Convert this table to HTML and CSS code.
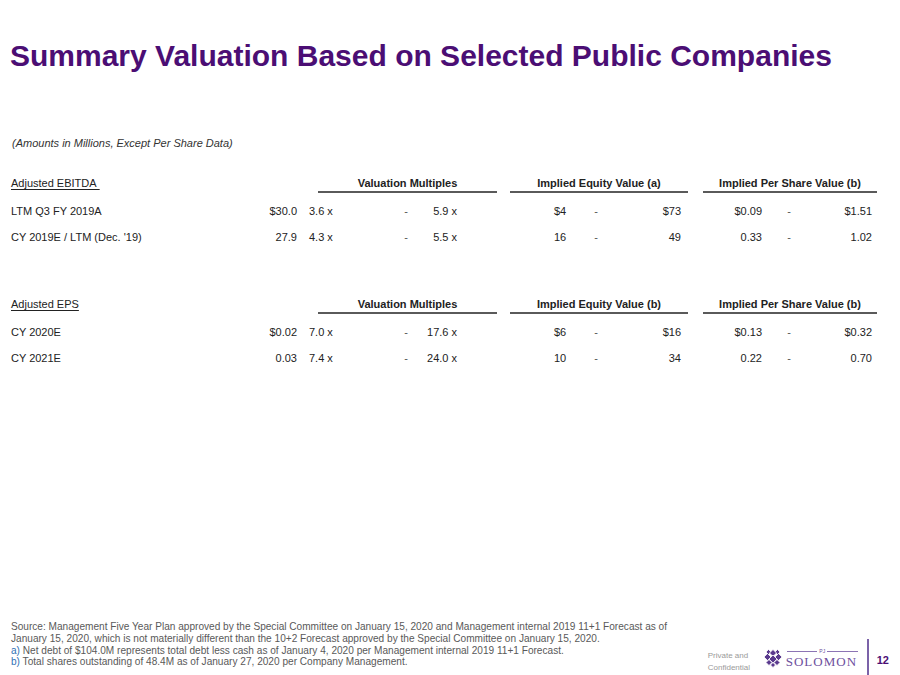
FILE: index.html
```html
<!DOCTYPE html>
<html lang="en">
<head>
<meta charset="utf-8">
<title>Summary Valuation Based on Selected Public Companies</title>
<link rel="stylesheet" href="styles.css">
</head>
<body>
<div class="page">
  <h1 class="title">Summary Valuation Based on Selected Public Companies</h1>
  <p class="note">(Amounts in Millions, Except Per Share Data)</p>

  <section class="block block-one">
    <div class="head">
      <span class="h-label">Adjusted EBITDA&nbsp;</span>
      <span class="h-grp h-vm">Valuation Multiples</span>
      <span class="h-grp h-eq">Implied Equity Value (a)</span>
      <span class="h-grp h-ps">Implied Per Share Value (b)</span>
    </div>
    <div class="row">
      <span class="c-label">LTM Q3 FY 2019A</span>
      <span class="c-val">$30.0</span>
      <span class="c-lo">3.6 x</span>
      <span class="c-dash">-</span>
      <span class="c-hi">5.9 x</span>
      <span class="c-eqlo">$4</span>
      <span class="c-dash">-</span>
      <span class="c-eqhi">$73</span>
      <span class="c-pslo">$0.09</span>
      <span class="c-dash">-</span>
      <span class="c-pshi">$1.51</span>
    </div>
    <div class="row">
      <span class="c-label">CY 2019E / LTM (Dec. '19)</span>
      <span class="c-val">27.9</span>
      <span class="c-lo">4.3 x</span>
      <span class="c-dash">-</span>
      <span class="c-hi">5.5 x</span>
      <span class="c-eqlo">16</span>
      <span class="c-dash">-</span>
      <span class="c-eqhi">49</span>
      <span class="c-pslo">0.33</span>
      <span class="c-dash">-</span>
      <span class="c-pshi">1.02</span>
    </div>
  </section>

  <section class="block block-two">
    <div class="head">
      <span class="h-label">Adjusted EPS</span>
      <span class="h-grp h-vm">Valuation Multiples</span>
      <span class="h-grp h-eq">Implied Equity Value (b)</span>
      <span class="h-grp h-ps">Implied Per Share Value (b)</span>
    </div>
    <div class="row">
      <span class="c-label">CY 2020E</span>
      <span class="c-val">$0.02</span>
      <span class="c-lo">7.0 x</span>
      <span class="c-dash">-</span>
      <span class="c-hi">17.6 x</span>
      <span class="c-eqlo">$6</span>
      <span class="c-dash">-</span>
      <span class="c-eqhi">$16</span>
      <span class="c-pslo">$0.13</span>
      <span class="c-dash">-</span>
      <span class="c-pshi">$0.32</span>
    </div>
    <div class="row">
      <span class="c-label">CY 2021E</span>
      <span class="c-val">0.03</span>
      <span class="c-lo">7.4 x</span>
      <span class="c-dash">-</span>
      <span class="c-hi">24.0 x</span>
      <span class="c-eqlo">10</span>
      <span class="c-dash">-</span>
      <span class="c-eqhi">34</span>
      <span class="c-pslo">0.22</span>
      <span class="c-dash">-</span>
      <span class="c-pshi">0.70</span>
    </div>
  </section>

  <footer class="footer">
    <div class="notes">
      <p>Source: Management Five Year Plan approved by the Special Committee on January 15, 2020 and Management internal 2019 11+1 Forecast as of January 15, 2020, which is not materially different than the 10+2 Forecast approved by the Special Committee on January 15, 2020.</p>
      <p><span class="mark">a)</span> Net debt of $104.0M represents total debt less cash as of January 4, 2020 per Management internal 2019 11+1 Forecast.</p>
      <p><span class="mark">b)</span> Total shares outstanding of 48.4M as of January 27, 2020 per Company Management.</p>
    </div>
    <div class="brand">
      <div class="private">Private and<br>Confidential</div>
      <svg class="logo-icon" viewBox="0 0 20 20" width="20" height="20" aria-hidden="true">
        <g fill="#5a3a8e" stroke="#ffffff" stroke-width="0.8">
          <polygon points="5.5,1.5 8,4 5.5,6.5 3,4"/>
          <polygon points="14.5,1.5 17,4 14.5,6.5 12,4"/>
          <polygon points="10,1.5 13.5,5 10,8.5 6.5,5"/>
          <polygon points="4.5,5.5 8,9 4.5,12.5 1,9"/>
          <polygon points="15.5,5.5 19,9 15.5,12.5 12,9"/>
          <polygon points="10,7 14,11 10,15 6,11"/>
          <polygon points="6,11.5 9,14.5 6,17.5 3,14.5"/>
          <polygon points="14,11.5 17,14.5 14,17.5 11,14.5"/>
          <polygon points="10,14.5 12.5,17 10,19.5 7.5,17"/>
        </g>
      </svg>
      <div class="wordmark">
        <div class="pj"><span class="rule"></span><span class="pj-text">PJ</span><span class="rule"></span></div>
        <div class="solomon">SOLOMON</div>
      </div>
      <div class="divider"></div>
      <div class="page-num">12</div>
    </div>
  </footer>
</div>
</body>
</html>
```

FILE: styles.css
```css
* {
  box-sizing: border-box;
}

html, body {
  margin: 0;
  padding: 0;
  background: #ffffff;
}

body {
  font-family: "Liberation Sans", Arial, sans-serif;
  color: #222222;
}

.page {
  width: 900px;
  height: 675px;
  display: flex;
  flex-direction: column;
  padding: 38px 0 0 11px;
  overflow: hidden;
}

.title {
  margin: 0 0 0 -1px;
  font-size: 30px;
  line-height: 36px;
  font-weight: bold;
  color: #4b0e74;
  white-space: nowrap;
}

.note {
  margin: 62px 0 0 1px;
  font-size: 11px;
  line-height: 14px;
  font-style: italic;
  color: #333333;
}

.block {
  display: flex;
  flex-direction: column;
  font-size: 11px;
}

.block-one {
  margin-top: 27px;
}

.block-two {
  margin-top: 48px;
}

.head {
  display: flex;
  align-items: flex-end;
  line-height: 13px;
  margin-bottom: 5px;
}

.h-label {
  width: 307px;
  text-decoration: underline;
  text-underline-offset: 2px;
  align-self: flex-start;
}

.h-grp {
  font-weight: bold;
  text-align: center;
  border-bottom: 2px solid #5a5a5a;
  padding-bottom: 1px;
}

.h-vm {
  width: 179px;
}

.h-eq {
  width: 178px;
  margin-left: 13px;
}

.h-ps {
  width: 174px;
  margin-left: 15px;
}

.row {
  display: grid;
  grid-template-columns: 238px 48px 99px 20px 41px 129px 20px 75px 98px 20px 73px;
  line-height: 26px;
  height: 26px;
  white-space: nowrap;
}

.c-val,
.c-hi,
.c-eqhi,
.c-pslo,
.c-pshi {
  text-align: right;
}

.c-lo {
  padding-left: 12px;
}

.c-dash {
  text-align: center;
  color: #555555;
}

.c-eqlo {
  padding-left: 97px;
}

.c-pslo {
  padding-right: 17px;
}

.footer {
  margin-top: auto;
  display: flex;
  align-items: flex-end;
  padding-right: 11px;
}

.notes {
  width: 690px;
  flex: 0 0 auto;
  padding-bottom: 7px;
  font-size: 10.1px;
  line-height: 11.7px;
  color: #595959;
}

.notes p {
  margin: 0;
  width: 680px;
}

.mark {
  color: #2f6fb5;
}

.brand {
  display: flex;
  align-items: center;
  height: 36px;
  margin-left: auto;
}

.private {
  font-size: 8px;
  line-height: 12px;
  color: #9a9a9a;
  width: 44px;
  margin-top: 10px;
}

.logo-icon {
  margin-left: 11px;
  margin-top: 2px;
}

.wordmark {
  margin-left: 3px;
  display: flex;
  flex-direction: column;
  width: 72px;
  margin-top: 2px;
}

.pj {
  display: flex;
  align-items: center;
  gap: 2px;
  height: 8px;
  padding-left: 1px;
}

.rule {
  flex: 1;
  height: 1px;
  background: #8c74b4;
}

.pj-text {
  font-size: 5px;
  line-height: 8px;
  color: #6e4f9e;
}

.solomon {
  font-family: "Liberation Serif", "Times New Roman", serif;
  font-size: 13px;
  line-height: 14px;
  letter-spacing: 1px;
  color: #6e4f9e;
}

.divider {
  width: 2px;
  height: 36px;
  background: #7b62a8;
  margin-left: 9px;
  align-self: flex-end;
}

.page-num {
  margin-left: 8px;
  font-size: 11px;
  font-weight: bold;
  color: #4b0e74;
  margin-top: 6px;
}
```
